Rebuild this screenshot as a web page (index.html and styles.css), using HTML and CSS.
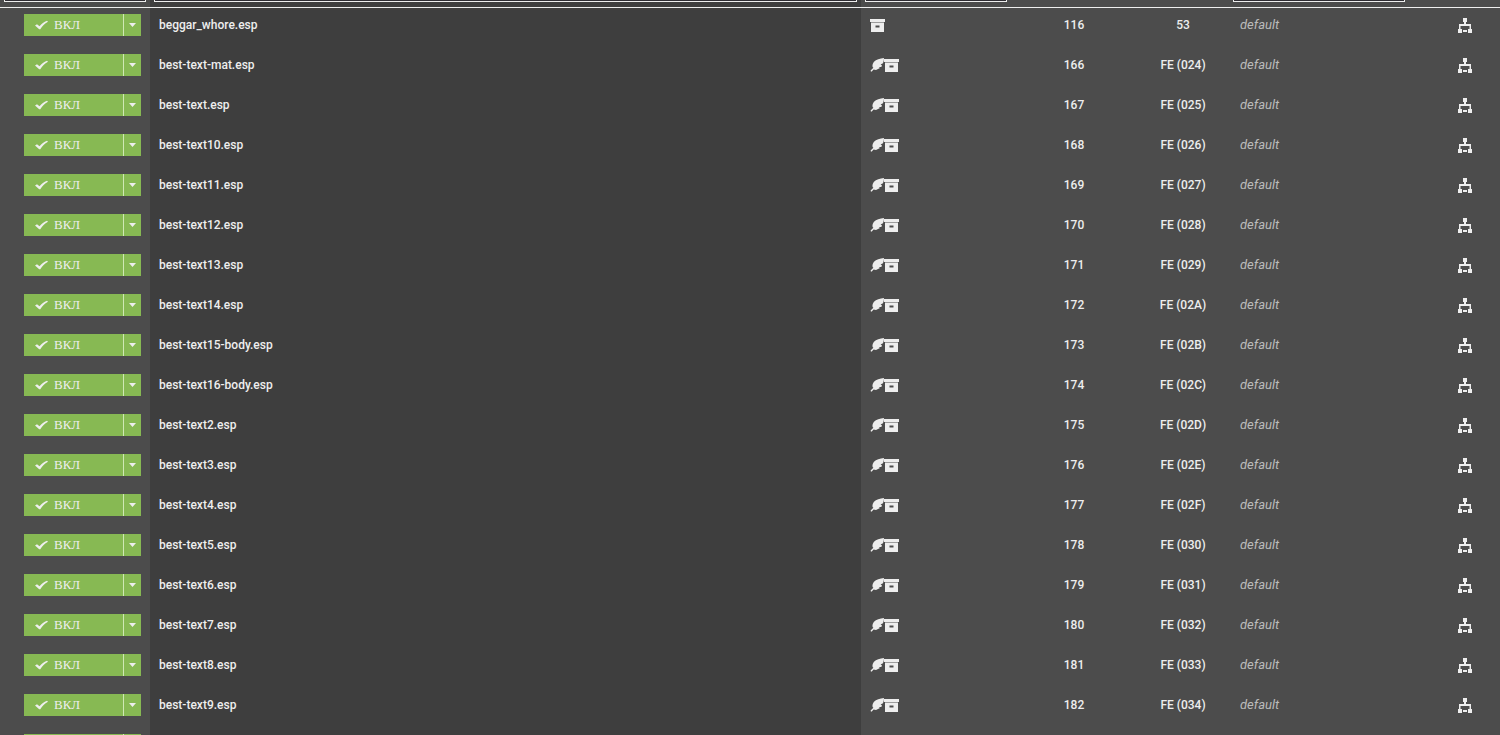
FILE: index.html
```
<!doctype html><html lang="ru">
<head><meta charset="utf-8"/><title>Плагины</title>
<meta name="viewport" content="width=device-width, initial-scale=1">
<link rel="stylesheet" href="styles.css">
<script src="plugins.js" defer></script>
</head>
<body>

<svg class="symbols" aria-hidden="true">
	<symbol id="check" viewBox="0 0 13 10"><path d="M0 5.600 2 4.200 4.500 6.200C6.500 3.800 9 1.700 12 .7L13 1.700C9.600 3.600 7.200 6 5.300 9.300H4.200Z"/></symbol>
	<symbol id="caret" viewBox="0 0 7 4"><path d="M0 0H7L3.500 4Z"/></symbol>
	<symbol id="feather" viewBox="0 0 14 14"><path d="M14 0C10 .5 6 1.300 4 3.800 2.800 5.400 2.200 7 2.600 9L3.400 9.800 .6 12.400 1 13.800C2 13.500 2.500 12.800 3.600 11.600L6 12 10 10 8.800 9 11.300 9 12 7.500 10.600 6.600 13 5.200C13.700 3.500 14 1.700 14 0Z"/></symbol>
	<symbol id="archive" viewBox="0 0 15 14"><path d="M0 1H15V4H0Z"/><path opacity=".5" d="M1 4H14V5H1Z"/><path fill-rule="evenodd" d="M1 5H14V14H1ZM5.500 7.500V9.500H9.500V7.500Z"/></symbol>
	<symbol id="tree" viewBox="0 0 14 16"><path d="M5 1H9V5H5ZM0 12H4V16H0ZM10 12H14V16H10Z"/><path d="M6 5H8V7H13V12H11.500V9H2.500V12H1V7H6ZM5 13H9V15H5Z"/></symbol>
</svg>

<table class="plugins">
	<colgroup>
		<col class="col-status"><col class="col-name"><col class="col-flags">
		<col class="col-order"><col class="col-index"><col class="col-group"><col class="col-deps">
	</colgroup>
	<thead>
		<tr>
			<th><input type="text" class="filter" aria-label="Статус"></th>
			<th><input type="text" class="filter" aria-label="Название"></th>
			<th><input type="text" class="filter" aria-label="Флаги"></th>
			<th></th>
			<th></th>
			<th><input type="text" class="filter filter-group" aria-label="Группа"></th>
			<th></th>
		</tr>
	</thead>
	<tbody id="rows"></tbody>
</table>

<template id="row">
	<tr>
		<td class="status"><div class="split">
			<button type="button" class="toggle" aria-label="ВКЛ"><svg class="i-check"><use href="#check"/></svg><span class="label">ВКЛ</span></button>
			<button type="button" class="more" aria-label="Ещё"><svg class="i-caret"><use href="#caret"/></svg></button>
		</div></td>
		<td class="name"></td>
		<td><div class="flags">
			<svg class="i-feather"><use href="#feather"/></svg>
			<svg class="i-archive"><use href="#archive"/></svg>
		</div></td>
		<td class="order"></td>
		<td class="index"></td>
		<td class="group">default</td>
		<td class="deps"><button type="button" class="link" aria-label="Зависимости"><svg class="i-tree"><use href="#tree"/></svg></button></td>
	</tr>
</template>

</body></html>
```

FILE: plugins.js
```
// [файл, порядок, индекс, light-плагин]
const plugins = [
	['beggar_whore.esp', '116', '53', false],
	['best-text-mat.esp', '166', 'FE (024)', true],
	['best-text.esp', '167', 'FE (025)', true],
	['best-text10.esp', '168', 'FE (026)', true],
	['best-text11.esp', '169', 'FE (027)', true],
	['best-text12.esp', '170', 'FE (028)', true],
	['best-text13.esp', '171', 'FE (029)', true],
	['best-text14.esp', '172', 'FE (02A)', true],
	['best-text15-body.esp', '173', 'FE (02B)', true],
	['best-text16-body.esp', '174', 'FE (02C)', true],
	['best-text2.esp', '175', 'FE (02D)', true],
	['best-text3.esp', '176', 'FE (02E)', true],
	['best-text4.esp', '177', 'FE (02F)', true],
	['best-text5.esp', '178', 'FE (030)', true],
	['best-text6.esp', '179', 'FE (031)', true],
	['best-text7.esp', '180', 'FE (032)', true],
	['best-text8.esp', '181', 'FE (033)', true],
	['best-text9.esp', '182', 'FE (034)', true],
	['', '', '', false],	// ещё не загружен
];

const rows = document.getElementById('rows');
const tpl = document.getElementById('row');
for (const [name, order, index, light] of plugins) {
	const tr = tpl.content.cloneNode(true);
	tr.querySelector('.name').textContent = name;
	tr.querySelector('.order').textContent = order;
	tr.querySelector('.index').textContent = index;
	if (! light) tr.querySelector('.i-feather').remove();
	if (! name) {
		tr.querySelector('.group').textContent = '';
		tr.querySelector('.label').textContent = '';
	}
	rows.append(tr);
}
```

FILE: styles.css
```
body {
	margin: 0;
	height: 100vh;
	overflow: hidden;
	background: #4c4c4c;
	color: #eee;
	font: 500 12px/22px Roboto, sans-serif;
}
svg {display: block; fill: currentColor;}
button {
	margin: 0;
	padding: 0;
	border: 0;
	background: none;
	color: inherit;
	cursor: pointer;
}
.symbols {display: none;}

.plugins {
	width: 100%;
	table-layout: fixed;
	border-collapse: separate;
	border-spacing: 0;
}
.col-status {width: 150px;}
.col-name {background: #3e3e3e;}
.col-flags {width: 150px;}
.col-order {width: 126px;}
.col-index {width: 92px;}
.col-group {width: 201px;}
.col-deps {width: 70px;}

/* header: only the lower edge of the filters is in view */
th {
	height: 7px;
	padding: 0 4px;
	border-bottom: 1px solid #eee;
	line-height: 0;
	text-align: left;
	vertical-align: top;
}
.filter {
	display: block;
	box-sizing: border-box;
	width: 100%;
	height: 2px;
	padding: 0;
	border: 1px solid #eee;
	border-top: 0;
	background: #2f2d33;
}
.filter-group {width: 172px;}

td {
	height: 22px;
	padding: 6px 9px 12px;
	vertical-align: top;
}
.status {padding-left: 24px;}
.split {display: flex; height: 22px;}
.toggle {
	display: flex;
	flex: 1;
	align-items: center;
	gap: 6px;
	padding-left: 11px;
	background: #87b953;
	font: 500 13px/22px "Liberation Serif", serif;
}
.more {
	display: flex;
	align-items: center;
	justify-content: center;
	width: 18px;
	border-left: 1px solid #d0e8b5;
	background: #87b953;
}
.flags {
	display: flex;
	align-items: center;
	height: 22px;
}
.order, .index, .deps {padding-left: 0; padding-right: 0; text-align: center;}
.group {
	padding-left: 11px;
	color: #bbb;
	font-size: 13px;
	font-style: italic;
	font-weight: 400;
}
.link {display: inline-block; padding: 3px; vertical-align: top;}

.i-check {width: 13px; height: 10px;}
.i-caret {width: 7px; height: 4px;}
.i-feather {width: 14px; height: 14px;}
.i-archive {width: 15px; height: 14px;}
.i-tree {width: 14px; height: 16px;}
```
